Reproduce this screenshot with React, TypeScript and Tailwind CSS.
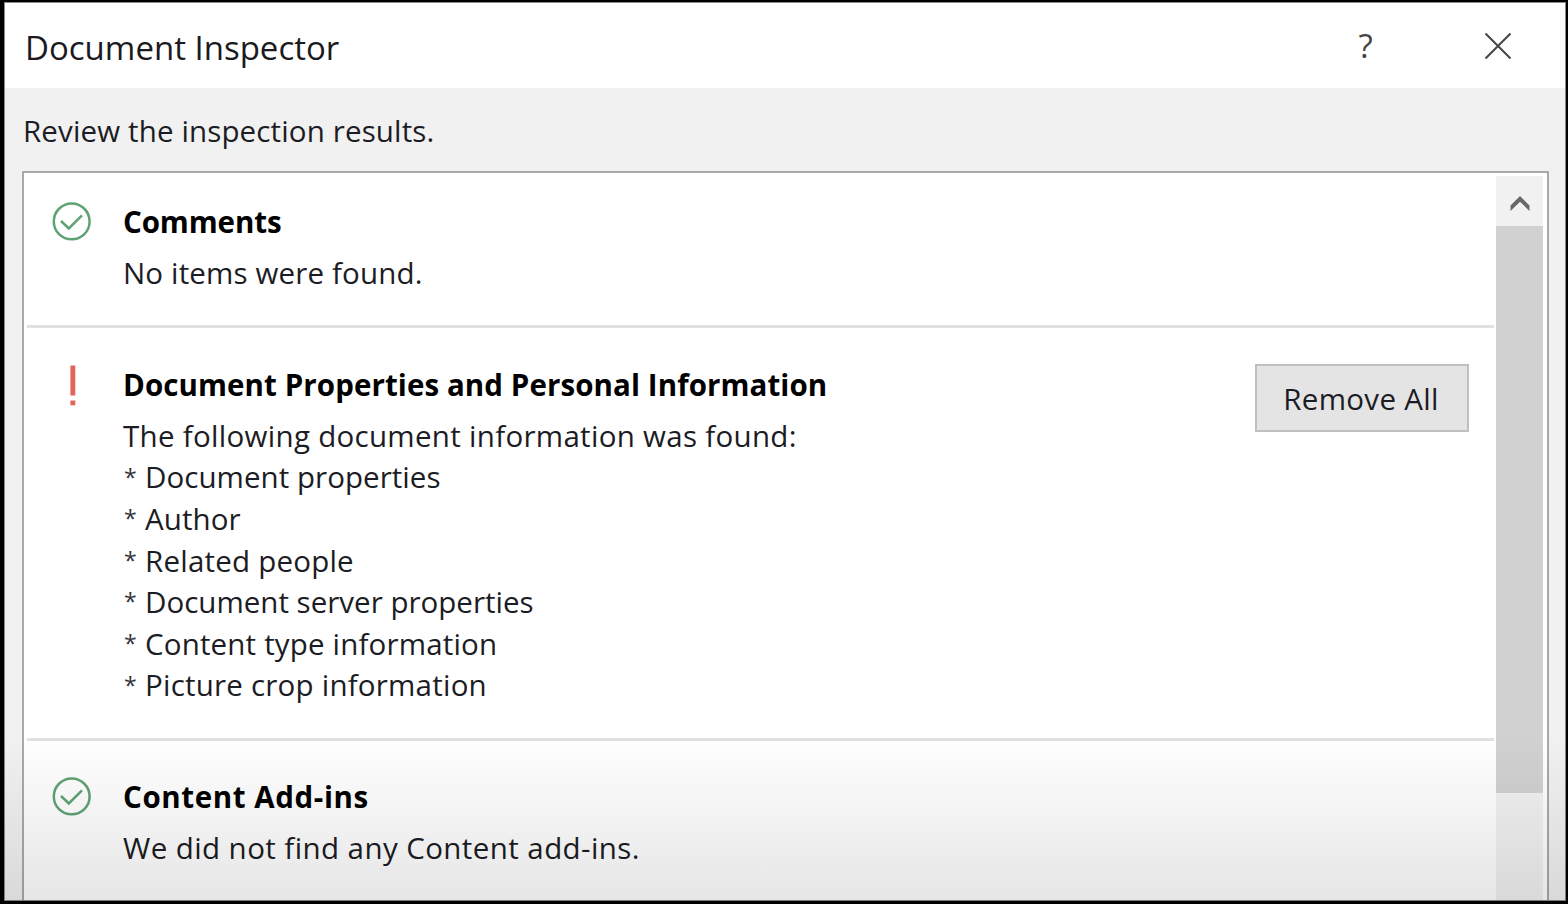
import { ReactNode } from "react";

function CheckIcon() {
  return (
    <svg className="h-10 w-10" viewBox="0 0 40 40" fill="none" stroke="#5fa374">
      <circle cx="20.7" cy="20.4" r="17.9" strokeWidth="2.5" />
      <path d="M10 20l7.8 7.4L31 14.4" strokeWidth="2.5" />
    </svg>
  );
}

function WarnIcon() {
  return (
    <svg className="h-[42px] w-10" viewBox="0 0 40 42" fill="#e0665a">
      <rect x="19.4" y="1.5" width="4.9" height="30" />
      <rect x="19.4" y="36.5" width="4.9" height="4.8" />
    </svg>
  );
}

function Line({ children, track }: { children: ReactNode; track: string }) {
  return <p className={`flex h-[41.6px] items-center whitespace-pre text-[29.5px] text-[#1c1c24] ${track}`}>{children}</p>;
}

const found = [
  { label: "Document properties", track: "tracking-[0.05px]" },
  { label: "Author", track: "tracking-[0.1px]" },
  { label: "Related people", track: "tracking-[0.22px]" },
  { label: "Document server properties", track: "tracking-[0.01px]" },
  { label: "Content type information", track: "tracking-[0.17px]" },
  { label: "Picture crop information", track: "tracking-[0.22px]" },
];

function Section({ icon, title, track, children }: { icon: ReactNode; title: string; track: string; children: ReactNode }) {
  return (
    <div className="flex">
      <div className="w-[72px] shrink-0">{icon}</div>
      <div>
        <h2 className={`flex h-[42px] items-center pt-[1px] whitespace-pre text-[29.5px] font-bold text-black ${track}`}>{title}</h2>
        <div className="pt-[9.1px]">{children}</div>
      </div>
    </div>
  );
}

export default function App() {
  return (
    <div className="relative h-[904px] w-[1568px] overflow-hidden bg-black pt-[2px] pb-[3px] pl-[4px] pr-[2px] font-['Open_Sans','Noto_Sans',sans-serif]">
      <div className="flex h-[899px] flex-col overflow-hidden border border-[#8b8b8b] bg-[#f1f1f1]">
        <header className="flex h-[85px] shrink-0 items-center bg-white pl-5">
          <h1 className="flex-1 pt-[3px] text-[33px] leading-none text-[#1a1a20]">Document Inspector</h1>
          <button className="w-[134px] pb-[1px] pl-[3px] text-center text-[33px] leading-none text-[#444]">?</button>
          <button className="flex w-[134px] justify-center">
            <svg className="h-7 w-7" viewBox="0 0 28 28" stroke="#444" strokeWidth="2" fill="none">
              <path d="M1.5 1.5l25 25M26.5 1.5l-25 25" />
            </svg>
          </button>
        </header>
        <p className="flex h-[83px] shrink-0 items-center pt-1 pl-[18px] text-[29.5px] tracking-[0.14px] text-[#1c1c24]">Review the inspection results.</p>
        <div className="mr-4 ml-[17px] flex h-[760px] shrink-0 border-2 border-[#a9a9ac] bg-white pt-[3px] pl-[3px] pr-1">
          <div className="w-[1467px] shrink-0">
            <div className="h-[149px] pt-[25px] pl-6">
              <Section icon={<CheckIcon />} title="Comments" track="tracking-[-0.1px]">
                <Line track="tracking-[0.15px]">No items were found.</Line>
              </Section>
            </div>
            <div className="flex h-[413px] items-start justify-between border-t-3 border-[#e1e1e1] pt-9 pr-[25px] pl-6">
              <Section icon={<WarnIcon />} title="Document Properties and Personal Information" track="tracking-[0.09px]">
                <Line track="tracking-[0.3px]">The following document information was found:</Line>
                {found.map((f) => (
                  <div key={f.label} className="flex">
                    <span className="w-[22px] pl-[1px] text-[23px] leading-[40px] text-[#33333a]">*</span>
                    <Line track={f.track}>{f.label}</Line>
                  </div>
                ))}
              </Section>
              <button className="h-[68px] w-[214px] border-2 border-[#c0c0c0] bg-[#e4e4e4] pt-[2px] pr-[2px] text-[29.5px] tracking-[0.3px] text-[#1c1c24]">Remove All</button>
            </div>
            <div className="border-t-3 border-[#e1e1e1] pt-[35px] pl-6">
              <Section icon={<CheckIcon />} title="Content Add-ins" track="tracking-[0.6px]">
                <Line track="tracking-[0.42px]">We did not find any Content add-ins.</Line>
              </Section>
            </div>
          </div>
          <div className="ml-[2px] flex w-[47px] flex-col bg-[#f1f1f1]">
            <div className="flex h-[50px] items-center justify-center pt-[6px]">
              <svg className="h-4 w-5" viewBox="0 0 20 16" fill="#686868">
                <path d="M10 0l9.5 9.5v5.5L10 5.8.5 15V9.5z" />
              </svg>
            </div>
            <div className="h-[567px] bg-[#d1d1d1]" />
          </div>
        </div>
      </div>
      <div className="pointer-events-none absolute inset-x-0 bottom-[3px] h-[166px] bg-linear-to-b from-black/0 to-black/10" />
    </div>
  );
}
